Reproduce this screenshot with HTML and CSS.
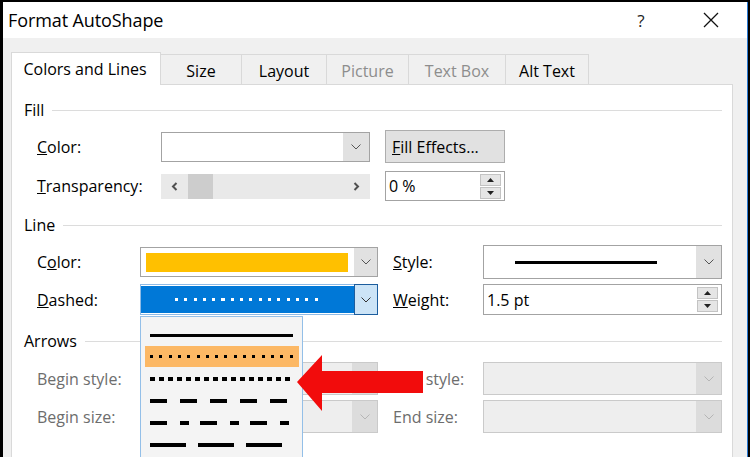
FILE: index.html
```html
<!DOCTYPE html>
<html lang="en">
<head>
<meta charset="utf-8">
<title>Format AutoShape</title>
<link rel="stylesheet" href="styles.css">
</head>
<body>
<div class="window">
  <header class="titlebar">
    <span class="title">Format AutoShape</span>
    <span class="help">?</span>
    <span class="close">
      <svg width="16" height="16" viewBox="0 0 16 16"><path d="M1 1 L15 15 M15 1 L1 15" stroke="#111" stroke-width="1.3" fill="none"/></svg>
    </span>
  </header>

  <div class="client">
    <nav class="tabs">
      <span class="tab active">Colors and Lines</span>
      <span class="tab w-size">Size</span>
      <span class="tab w-layout">Layout</span>
      <span class="tab w-picture off">Picture</span>
      <span class="tab w-textbox off">Text Box</span>
      <span class="tab w-alt">Alt Text</span>
    </nav>

    <div class="panel">
      <section class="group">
        <div class="group-head"><span>Fill</span><i class="rule"></i></div>
        <div class="grid grid-fill">
          <span class="lbl"><u>C</u>olor:</span>
          <div class="combo">
            <div class="field"></div>
            <div class="drop"><svg width="10" height="6" viewBox="0 0 10 6"><path d="M0.5 0.5 L5 5 L9.5 0.5" stroke="#555" fill="none"/></svg></div>
          </div>
          <span class="btn"><u>F</u>ill Effects...</span>

          <span class="lbl"><u>T</u>ransparency:</span>
          <div class="scroll">
            <span class="sarrow"><svg width="7" height="9" viewBox="0 0 7 9"><path d="M5.5 1 L2 4.5 L5.5 8" stroke="#505050" stroke-width="2" fill="none"/></svg></span>
            <span class="thumb"></span>
            <span class="strack"></span>
            <span class="sarrow"><svg width="7" height="9" viewBox="0 0 7 9"><path d="M1.5 1 L5 4.5 L1.5 8" stroke="#505050" stroke-width="2" fill="none"/></svg></span>
          </div>
          <div class="spin spin-small">
            <span class="spin-text">0 %</span>
            <span class="spin-btns">
              <span class="sb"><svg width="7" height="4" viewBox="0 0 7 4"><path d="M0 4 L3.5 0 L7 4 Z" fill="#222"/></svg></span>
              <span class="sb"><svg width="7" height="4" viewBox="0 0 7 4"><path d="M0 0 L3.5 4 L7 0 Z" fill="#222"/></svg></span>
            </span>
          </div>
        </div>
      </section>

      <section class="group g-line">
        <div class="group-head"><span>Line</span><i class="rule"></i></div>
        <div class="grid grid-line">
          <span class="lbl">C<u>o</u>lor:</span>
          <div class="combo">
            <div class="field"><span class="swatch"></span></div>
            <div class="drop"><svg width="10" height="6" viewBox="0 0 10 6"><path d="M0.5 0.5 L5 5 L9.5 0.5" stroke="#555" fill="none"/></svg></div>
          </div>
          <span class="lbl lbl-2"><u>S</u>tyle:</span>
          <div class="combo combo-tall">
            <div class="field center"><span class="solid-line"></span></div>
            <div class="drop"><svg width="10" height="6" viewBox="0 0 10 6"><path d="M0.5 0.5 L5 5 L9.5 0.5" stroke="#555" fill="none"/></svg></div>
          </div>

          <span class="lbl"><u>D</u>ashed:</span>
          <div class="combo combo-open">
            <div class="field selected"><span class="dots-white"></span></div>
            <div class="drop drop-hot"><svg width="10" height="6" viewBox="0 0 10 6"><path d="M0.5 0.5 L5 5 L9.5 0.5" stroke="#333" fill="none"/></svg></div>
          </div>
          <span class="lbl lbl-2"><u>W</u>eight:</span>
          <div class="spin">
            <span class="spin-text">1.5 pt</span>
            <span class="spin-btns">
              <span class="sb"><svg width="7" height="4" viewBox="0 0 7 4"><path d="M0 4 L3.5 0 L7 4 Z" fill="#222"/></svg></span>
              <span class="sb"><svg width="7" height="4" viewBox="0 0 7 4"><path d="M0 0 L3.5 4 L7 0 Z" fill="#222"/></svg></span>
            </span>
          </div>
        </div>
      </section>

      <section class="group g-arrows">
        <div class="group-head"><span>Arrows</span><i class="rule"></i></div>
        <div class="grid grid-line grid-arrows">
          <span class="lbl dis">Begin style:</span>
          <div class="combo combo-dis">
            <div class="field"></div>
            <div class="drop"><svg width="10" height="6" viewBox="0 0 10 6"><path d="M0.5 0.5 L5 5 L9.5 0.5" stroke="#b5b5b5" fill="none"/></svg></div>
          </div>
          <span class="lbl lbl-2 dis">End style:</span>
          <div class="combo combo-dis">
            <div class="field"></div>
            <div class="drop"><svg width="10" height="6" viewBox="0 0 10 6"><path d="M0.5 0.5 L5 5 L9.5 0.5" stroke="#b5b5b5" fill="none"/></svg></div>
          </div>

          <span class="lbl dis">Begin size:</span>
          <div class="combo combo-dis">
            <div class="field"></div>
            <div class="drop"><svg width="10" height="6" viewBox="0 0 10 6"><path d="M0.5 0.5 L5 5 L9.5 0.5" stroke="#b5b5b5" fill="none"/></svg></div>
          </div>
          <span class="lbl lbl-2 dis">End size:</span>
          <div class="combo combo-dis">
            <div class="field"></div>
            <div class="drop"><svg width="10" height="6" viewBox="0 0 10 6"><path d="M0.5 0.5 L5 5 L9.5 0.5" stroke="#b5b5b5" fill="none"/></svg></div>
          </div>
        </div>
      </section>
    </div>
  </div>

  <!-- open list of the Dashed combo -->
  <ul class="dash-list">
    <li><span class="ln ln-solid"></span></li>
    <li class="hot"><span class="ln ln-round"></span></li>
    <li><span class="ln ln-square"></span></li>
    <li><span class="ln ln-dash"></span></li>
    <li><span class="ln ln-dashdot"></span></li>
    <li><span class="ln ln-long"></span></li>
  </ul>

  <svg class="pointer" width="128" height="58" viewBox="0 0 128 58">
    <path d="M1 28 L26 1 L26 17 L127 17 L127 39 L26 39 L26 57 Z" fill="#f20c0c"/>
  </svg>
</div>
</body>
</html>
```

FILE: styles.css
```css
* { box-sizing: border-box; }

html, body { margin: 0; padding: 0; }

body {
  width: 750px;
  height: 457px;
  overflow: hidden;
  background: #000;
  font-family: "Open Sans", "Noto Sans", sans-serif;
  font-size: 16px;
  color: #000;
}

.window {
  position: relative;
  margin: 2px 0 0 3px;
  width: 745px;
  height: 455px;
  border-right: 1px solid #2a7ad4;
  background: #f0f0f0;
  overflow: hidden;
}

/* title bar */
.titlebar {
  height: 36px;
  background: #fff;
  display: flex;
  align-items: center;
  padding-left: 5px;
}
.title { font-size: 18px; letter-spacing: -0.1px; }
.help {
  margin-left: auto;
  width: 20px;
  text-align: center;
  font-size: 17px;
  color: #222;
  margin-right: 40px;
}
.close {
  width: 40px;
  margin-right: 16px;
  display: flex;
  justify-content: center;
}

/* client area */
.client { padding: 14px 0 0 8px; }

.tabs {
  display: flex;
  align-items: flex-end;
  height: 33px;
  position: relative;
  z-index: 1;
  margin-bottom: -1px;
}
.tab {
  height: 30px;
  margin-bottom: 1px;
  border: 1px solid #d9d9d9;
  border-left: none;
  border-bottom: none;
  display: flex;
  align-items: center;
  justify-content: center;
  font-size: 16px;
  padding-top: 2px;
}
.tab.active {
  width: 150px;
  height: 33px;
  margin-bottom: 0;
  background: #fff;
  border-left: 1px solid #d9d9d9;
  padding-top: 0;
  padding-right: 2px;
}
.tab.off { color: #8d8d8d; }
.w-size { width: 81px; }
.w-layout { width: 85px; }
.w-picture { width: 82px; }
.w-textbox { width: 97px; }
.w-alt { width: 83px; }

.panel {
  width: 722px;
  height: 400px;
  background: #fff;
  border: 1px solid #d9d9d9;
  padding: 15px 10px 0 12px;
}

.group-head {
  display: flex;
  align-items: center;
  height: 20px;
  gap: 8px;
}
.rule { flex: 1; height: 1px; background: #dcdcdc; }

.grid { display: grid; margin-left: 13px; align-items: center; }

.grid-fill {
  margin-top: 10px;
  grid-template-columns: 124px 209px 15px 120px;
  grid-template-rows: 33px 30px;
  row-gap: 8px;
}
.grid-fill .btn, .grid-fill .spin { grid-column: 4; }

.g-line { margin-top: 14px; }
.grid-line {
  margin-top: 10px;
  grid-template-columns: 103px 238px 105px 239px;
  grid-template-rows: 34px 31px;
  row-gap: 5px;
}
.g-arrows { margin-top: 16px; }
.grid-arrows {
  margin-top: 11px;
  grid-template-rows: 33px 33px;
}

.lbl { white-space: nowrap; }
.lbl-2 { padding-left: 15px; }
.lbl.dis { color: #6d6d6d; }

/* combo boxes */
.combo {
  height: 30px;
  border: 1px solid #a3a3a3;
  background: #fff;
  display: flex;
}
.combo-tall { height: 34px; }
.field { flex: 1; display: flex; align-items: center; }
.field.center { justify-content: center; padding-right: 8px; }
.drop {
  width: 26px;
  background: #e1e1e1;
  display: flex;
  align-items: center;
  justify-content: center;
}
.grid-line .drop { width: 23px; }
.combo-tall .drop { width: 25px; }

.swatch {
  display: block;
  margin: 0 6px 0 5px;
  height: 19px;
  flex: 1;
  background: #ffc000;
}
.solid-line { display: block; width: 142px; height: 3px; background: #000; }

.combo-open { height: 31px; border-color: #8fbbe6; }
.field.selected { background: #0078d7; margin: 1px 0; padding-left: 34px; }
.dots-white {
  display: block;
  width: 146px;
  height: 3px;
  background: repeating-linear-gradient(90deg, #fff 0 3px, transparent 3px 9.3px);
}
.drop-hot {
  background: #cce4f7;
  border: 1px solid #1c5d9e;
  margin: -1px -1px -1px 0;
  width: 24px !important;
}

.combo-dis { height: 33px; background: #eeeeee; border-color: #cacaca; }
.combo-dis .drop { background: #dcdcdc; width: 25px; }

/* push button */
.btn {
  height: 33px;
  border: 1px solid #adadad;
  background: #e1e1e1;
  display: flex;
  align-items: center;
  padding-left: 6px;
  white-space: nowrap;
}

/* scrollbar */
.scroll {
  height: 25px;
  background: #e9e9e9;
  display: flex;
  align-items: stretch;
}
.sarrow { width: 27px; display: flex; align-items: center; justify-content: center; }
.thumb { width: 25px; background: #cdcdcd; }
.strack { flex: 1; }

/* spin box */
.spin {
  height: 30px;
  border: 1px solid #a3a3a3;
  background: #fff;
  display: flex;
  align-items: center;
  justify-content: space-between;
  padding-left: 3px;
}
.grid-line .spin { height: 31px; }
.spin-btns {
  display: flex;
  flex-direction: column;
  width: 21px;
  margin-right: 3px;
  gap: 1px;
}
.sb {
  height: 12px;
  background: #e5e5e5;
  border: 1px solid #c3c3c3;
  display: flex;
  align-items: center;
  justify-content: center;
}

/* open dash-style list */
.dash-list {
  position: absolute;
  left: 137px;
  top: 314px;
  width: 163px;
  height: 150px;
  margin: 0;
  padding: 7px 0 0 4px;
  list-style: none;
  background: #f4f4f4;
  border: 1px solid #93bfe8;
  z-index: 2;
}
.dash-list li {
  width: 154px;
  height: 22px;
  display: flex;
  align-items: center;
  padding-left: 5px;
}
.dash-list li.hot { background: #fcb865; height: 21px; margin-bottom: 1px; }
.ln { display: block; width: 143px; }
.ln-solid { height: 3px; background: #000; }
.ln-round { height: 3px; background: repeating-linear-gradient(90deg, #000 0 3px, transparent 3px 9.3px); }
.ln-square { height: 4px; background: repeating-linear-gradient(90deg, #000 0 5px, transparent 5px 9px); }
.ln-dash { height: 4px; background: repeating-linear-gradient(90deg, #000 0 17px, transparent 17px 30px); }
.ln-dashdot { height: 4px; background: repeating-linear-gradient(90deg, #000 0 17px, transparent 17px 30px, #000 30px 39px, transparent 39px 50px); }
.ln-long { height: 4px; background: repeating-linear-gradient(90deg, #000 0 36px, transparent 36px 48px); }

.pointer {
  position: absolute;
  left: 293px;
  top: 352px;
  z-index: 3;
}
```
